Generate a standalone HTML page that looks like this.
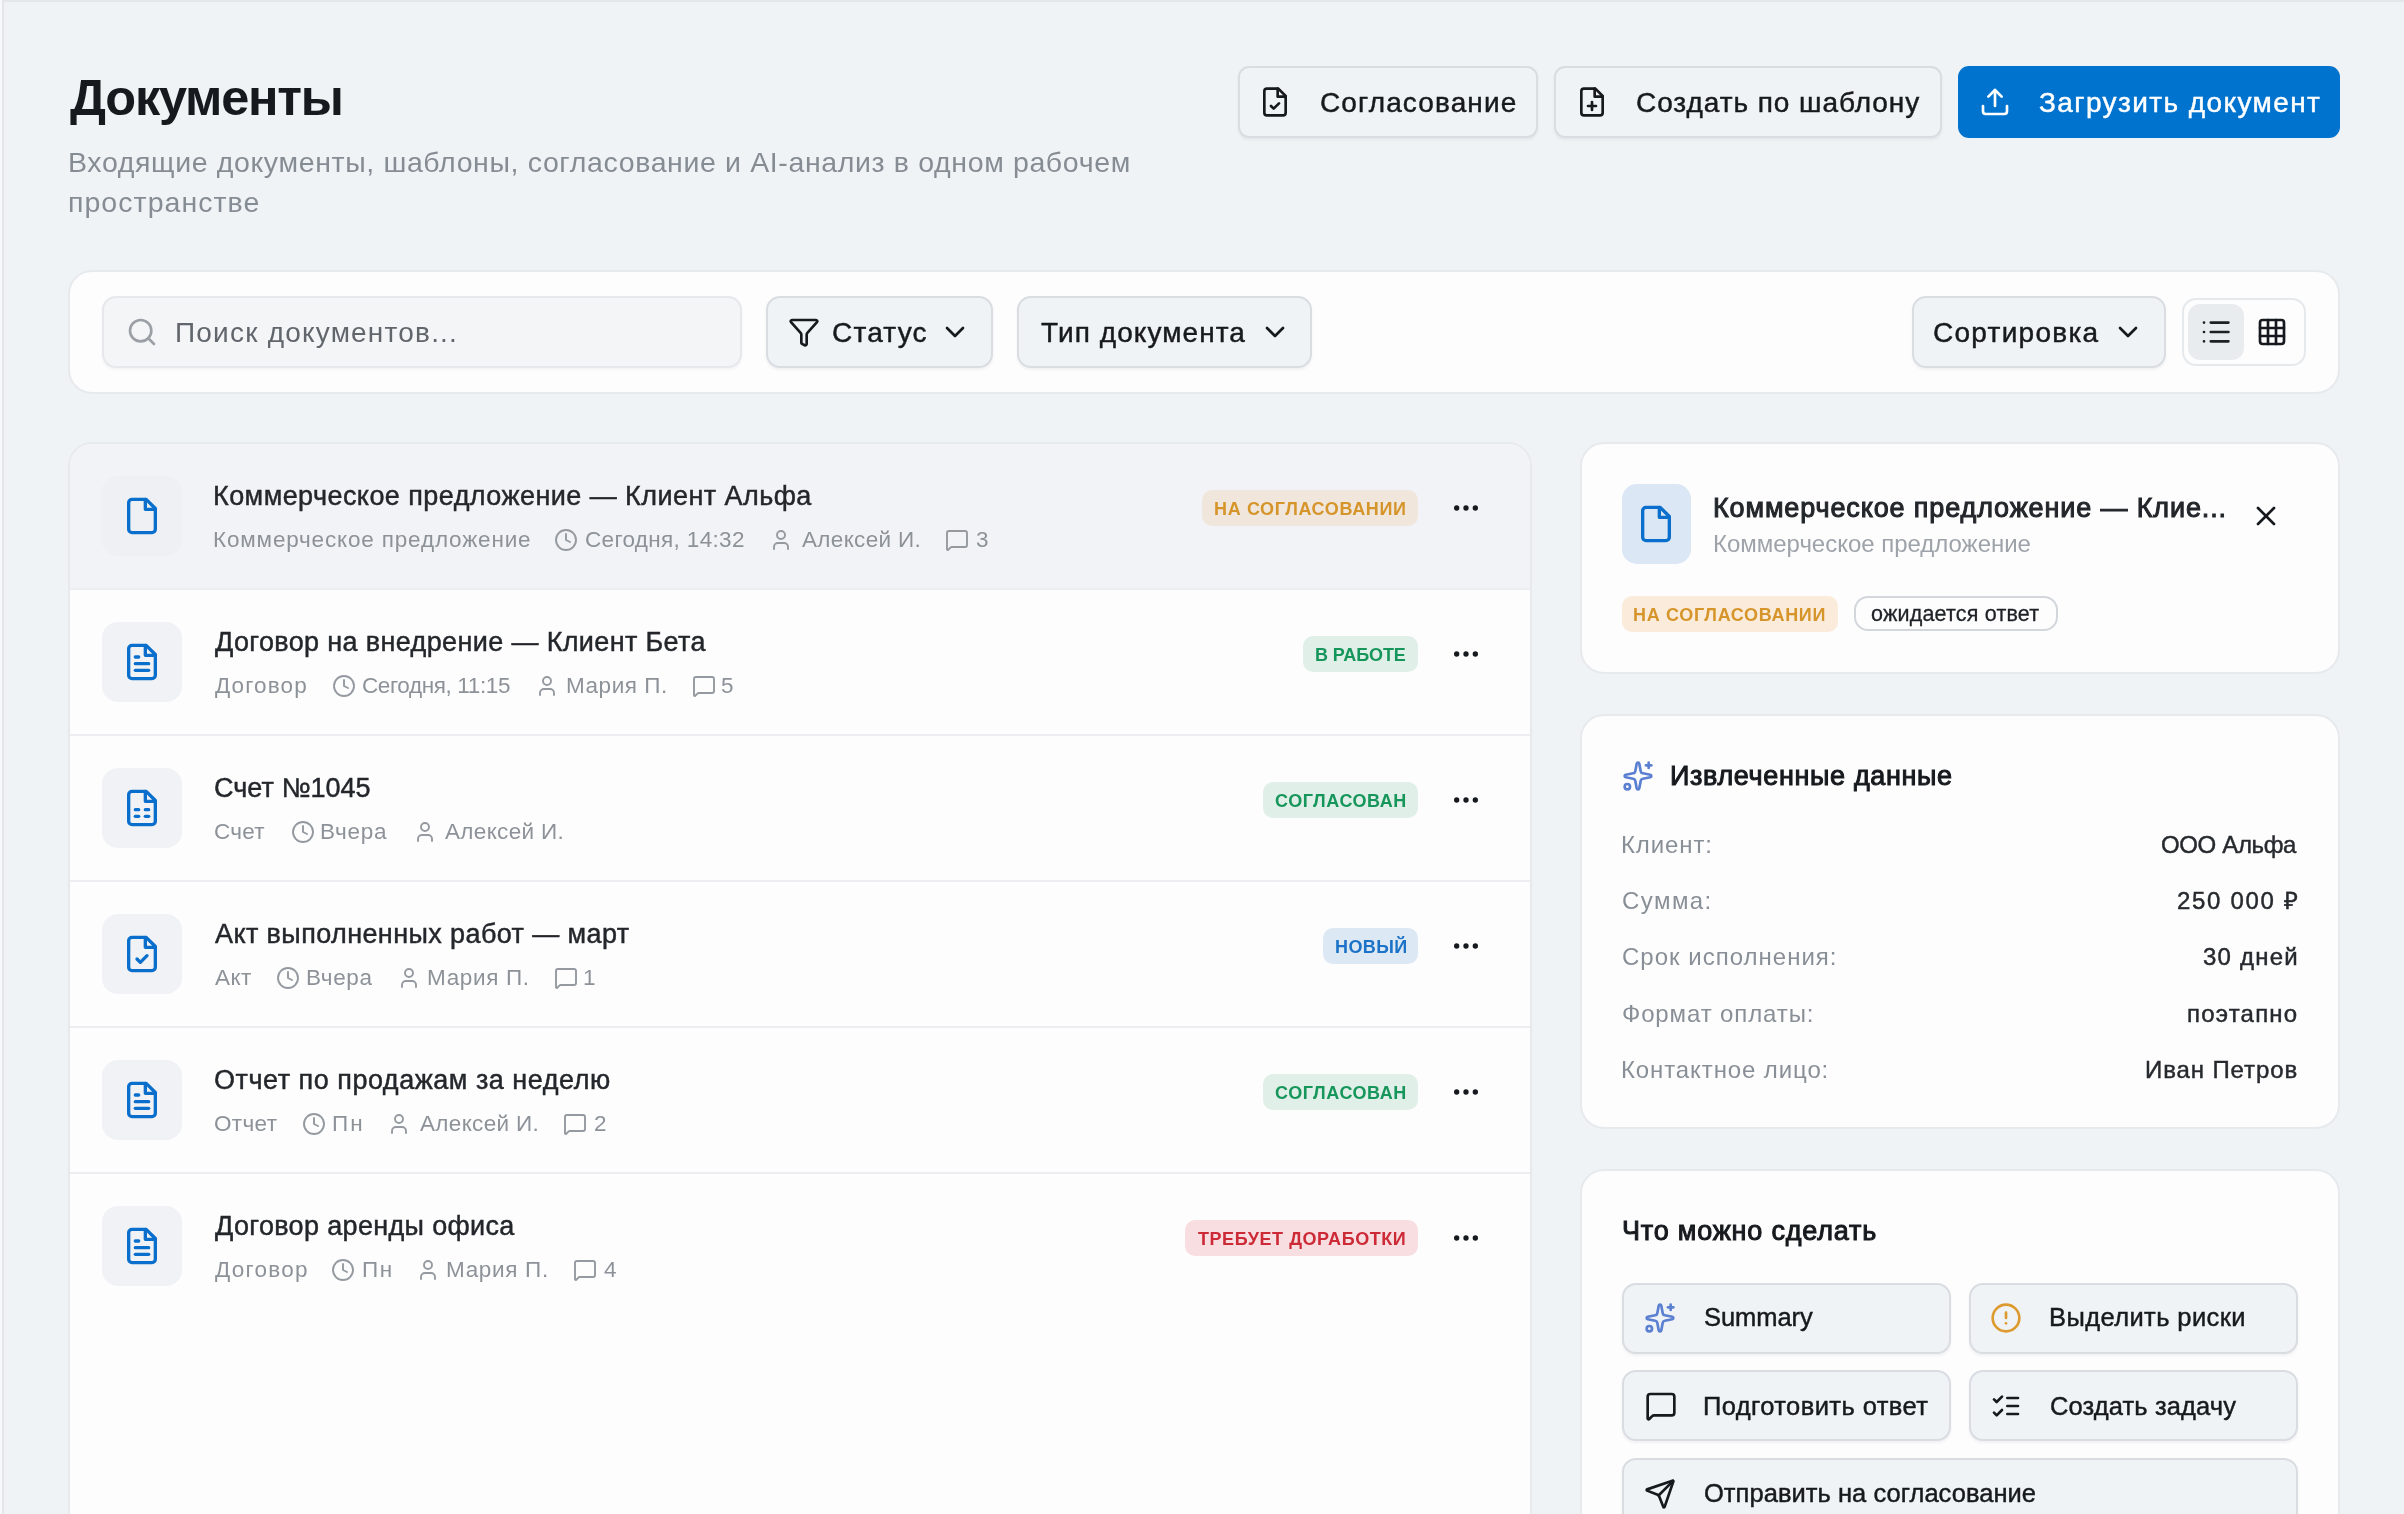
<!DOCTYPE html>
<html lang="ru"><head><meta charset="utf-8"><title>Документы</title>
<style>
html,body{margin:0;padding:0}
body{width:2404px;height:1514px;overflow:hidden;position:relative;background:#f0f3f6;font-family:"Liberation Sans",sans-serif}
body>div,body>svg,body>span{position:absolute}
.t{line-height:1;white-space:nowrap;will-change:transform}
</style></head><body>
<div style="left:0px;top:0px;width:2px;height:1514px;background:#f8f9fb"></div>
<div style="left:2px;top:0px;width:2px;height:1514px;background:#e3e6ea"></div>
<div style="left:2px;top:0px;width:2402px;height:2px;background:#e3e6ea"></div>
<div style="left:1238px;top:66px;width:300px;height:72px;background:#f0f3f6;border:2px solid #d9dde2;border-radius:14px;box-shadow:0 2px 3px rgba(16,24,40,0.05);box-sizing:border-box;border-radius:11px;"></div>
<div style="left:1554px;top:66px;width:388px;height:72px;background:#f0f3f6;border:2px solid #d9dde2;border-radius:14px;box-shadow:0 2px 3px rgba(16,24,40,0.05);box-sizing:border-box;border-radius:11px;"></div>
<div style="left:1958px;top:66px;width:382px;height:72px;background:#0073cf;border-radius:11px;"></div>
<svg style="left:1259px;top:86.4px" width="32" height="32" viewBox="0 0 24 24" fill="none" stroke="#16191d" stroke-width="2" stroke-linecap="round" stroke-linejoin="round"><path d="M14.5 2H6a2 2 0 0 0-2 2v16a2 2 0 0 0 2 2h12a2 2 0 0 0 2-2V7.5L14.5 2z"/><polyline points="14 2 14 8 20 8"/><path d="m9 15 2 2 4-4"/></svg>
<svg style="left:1575.5px;top:86.4px" width="32" height="32" viewBox="0 0 24 24" fill="none" stroke="#16191d" stroke-width="2" stroke-linecap="round" stroke-linejoin="round"><path d="M14.5 2H6a2 2 0 0 0-2 2v16a2 2 0 0 0 2 2h12a2 2 0 0 0 2-2V7.5L14.5 2z"/><polyline points="14 2 14 8 20 8"/><path d="M9 15h6"/><path d="M12 18v-6"/></svg>
<svg style="left:1979px;top:86.3px" width="32" height="32" viewBox="0 0 24 24" fill="none" stroke="#ffffff" stroke-width="2" stroke-linecap="round" stroke-linejoin="round"><path d="M21 15v4a2 2 0 0 1-2 2H5a2 2 0 0 1-2-2v-4"/><polyline points="17 8 12 3 7 8"/><line x1="12" x2="12" y1="3" y2="15"/></svg>
<div style="left:68px;top:270px;width:2272px;height:124px;background:#fdfdfe;border:2px solid #e7eaed;border-radius:24px;box-sizing:border-box;"></div>
<div style="left:102px;top:296px;width:640px;height:72px;background:#f4f5f7;border:2px solid #e6e8eb;border-radius:14px;box-sizing:border-box;box-shadow:0 2px 3px rgba(16,24,40,0.04);"></div>
<svg style="left:126.3px;top:316.3px" width="32" height="32" viewBox="0 0 24 24" fill="none" stroke="#9aa0a6" stroke-width="2" stroke-linecap="round" stroke-linejoin="round"><circle cx="11" cy="11" r="8"/><path d="m21 21-4.3-4.3"/></svg>
<div style="left:766px;top:296px;width:227px;height:72px;background:#f0f3f6;border:2px solid #d9dde2;border-radius:14px;box-shadow:0 2px 3px rgba(16,24,40,0.05);box-sizing:border-box;"></div>
<svg style="left:788.3px;top:316px" width="32" height="32" viewBox="0 0 24 24" fill="none" stroke="#16191d" stroke-width="2" stroke-linecap="round" stroke-linejoin="round"><path d="M10 20a1 1 0 0 0 .553.895l2 1A1 1 0 0 0 14 21v-7a2 2 0 0 1 .517-1.341L21.74 4.67A1 1 0 0 0 21 3H3a1 1 0 0 0-.742 1.67l7.225 7.989A2 2 0 0 1 10 14z"/></svg>
<svg style="left:938.8px;top:316px" width="32" height="32" viewBox="0 0 24 24" fill="none" stroke="#16191d" stroke-width="2" stroke-linecap="round" stroke-linejoin="round"><path d="m6 9 6 6 6-6"/></svg>
<div style="left:1017px;top:296px;width:295px;height:72px;background:#f0f3f6;border:2px solid #d9dde2;border-radius:14px;box-shadow:0 2px 3px rgba(16,24,40,0.05);box-sizing:border-box;"></div>
<svg style="left:1259.3px;top:316px" width="32" height="32" viewBox="0 0 24 24" fill="none" stroke="#16191d" stroke-width="2" stroke-linecap="round" stroke-linejoin="round"><path d="m6 9 6 6 6-6"/></svg>
<div style="left:1912px;top:296px;width:254px;height:72px;background:#f0f3f6;border:2px solid #d9dde2;border-radius:14px;box-shadow:0 2px 3px rgba(16,24,40,0.05);box-sizing:border-box;"></div>
<svg style="left:2112.3px;top:316px" width="32" height="32" viewBox="0 0 24 24" fill="none" stroke="#16191d" stroke-width="2" stroke-linecap="round" stroke-linejoin="round"><path d="m6 9 6 6 6-6"/></svg>
<div style="left:2182px;top:298px;width:124px;height:68px;background:#fdfdfe;border:2px solid #e6e9ec;border-radius:14px;box-sizing:border-box;"></div>
<div style="left:2188px;top:304px;width:56px;height:56px;background:#e9ecef;border-radius:12px;"></div>
<svg style="left:2196px;top:316px" width="40" height="32" viewBox="0 0 40 32" fill="none" stroke="#1d2024" stroke-width="2.7" stroke-linecap="round"><path d="M8 6.6h.01M8 16h.01M8 25.3h.01M14.8 6.6h17.6M14.8 16h17.6M14.8 25.3h17.6"/></svg>
<svg style="left:2256px;top:316px" width="32" height="32" viewBox="0 0 24 24" fill="none" stroke="#16191d" stroke-width="2" stroke-linecap="round" stroke-linejoin="round"><rect width="18" height="18" x="3" y="3" rx="2"/><path d="M3 9h18"/><path d="M3 15h18"/><path d="M9 3v18"/><path d="M15 3v18"/></svg>
<div style="left:68px;top:442px;width:1464px;height:1158px;background:#fdfdfe;border:2px solid #e7eaed;border-radius:24px;box-sizing:border-box;"></div>
<div style="left:70px;top:444px;width:1460px;height:144px;background:#f2f3f6;border-radius:22px 22px 0 0;"></div>
<div style="left:70px;top:588px;width:1460px;height:2px;background:#eceef1"></div>
<div style="left:70px;top:734px;width:1460px;height:2px;background:#eceef1"></div>
<div style="left:70px;top:880px;width:1460px;height:2px;background:#eceef1"></div>
<div style="left:70px;top:1026px;width:1460px;height:2px;background:#eceef1"></div>
<div style="left:70px;top:1172px;width:1460px;height:2px;background:#eceef1"></div>
<div style="left:102px;top:476px;width:80px;height:80px;background:#eef0f3;border-radius:16px;"></div>
<svg style="left:122px;top:496.3px" width="40" height="40" viewBox="0 0 24 24" fill="none" stroke="#0a6fcc" stroke-width="2" stroke-linecap="round" stroke-linejoin="round"><path d="M14.5 2H6a2 2 0 0 0-2 2v16a2 2 0 0 0 2 2h12a2 2 0 0 0 2-2V7.5L14.5 2z"/><polyline points="14 2 14 8 20 8"/></svg>
<svg style="left:554.4px;top:528px" width="24" height="24" viewBox="0 0 24 24" fill="none" stroke="#949aa0" stroke-width="1.9" stroke-linecap="round" stroke-linejoin="round"><circle cx="12" cy="12" r="10"/><polyline points="12 6 12 12 16 14"/></svg>
<svg style="left:769px;top:528px" width="24" height="24" viewBox="0 0 24 24" fill="none" stroke="#949aa0" stroke-width="1.9" stroke-linecap="round" stroke-linejoin="round"><path d="M19 21v-2a4 4 0 0 0-4-4H9a4 4 0 0 0-4 4v2"/><circle cx="12" cy="7" r="4"/></svg>
<svg style="left:944.8px;top:528px" width="24" height="24" viewBox="0 0 24 24" fill="none" stroke="#949aa0" stroke-width="1.9" stroke-linecap="round" stroke-linejoin="round"><path d="M22 17a2 2 0 0 1-2 2H6.828a2 2 0 0 0-1.414.586l-2.202 2.202A.71.71 0 0 1 2 21.286V5a2 2 0 0 1 2-2h16a2 2 0 0 1 2 2z"/></svg>
<div style="left:1202px;top:490px;width:216px;height:36px;background:rgba(230,150,40,0.13);border-radius:10px;"></div>
<svg style="left:1450px;top:492px" width="32" height="32" viewBox="0 0 24 24" fill="none" stroke="#16191d" stroke-width="2" stroke-linecap="round" stroke-linejoin="round"><circle cx="12" cy="12" r="1"/><circle cx="19" cy="12" r="1"/><circle cx="5" cy="12" r="1"/></svg>
<div style="left:102px;top:622px;width:80px;height:80px;background:#f1f2f5;border-radius:16px;"></div>
<svg style="left:122px;top:642.3px" width="40" height="40" viewBox="0 0 24 24" fill="none" stroke="#0a6fcc" stroke-width="2" stroke-linecap="round" stroke-linejoin="round"><path d="M14.5 2H6a2 2 0 0 0-2 2v16a2 2 0 0 0 2 2h12a2 2 0 0 0 2-2V7.5L14.5 2z"/><polyline points="14 2 14 8 20 8"/><path d="M10 9H8"/><path d="M16 13H8"/><path d="M16 17H8"/></svg>
<svg style="left:331.5px;top:674px" width="24" height="24" viewBox="0 0 24 24" fill="none" stroke="#949aa0" stroke-width="1.9" stroke-linecap="round" stroke-linejoin="round"><circle cx="12" cy="12" r="10"/><polyline points="12 6 12 12 16 14"/></svg>
<svg style="left:535px;top:674px" width="24" height="24" viewBox="0 0 24 24" fill="none" stroke="#949aa0" stroke-width="1.9" stroke-linecap="round" stroke-linejoin="round"><path d="M19 21v-2a4 4 0 0 0-4-4H9a4 4 0 0 0-4 4v2"/><circle cx="12" cy="7" r="4"/></svg>
<svg style="left:691.7px;top:674px" width="24" height="24" viewBox="0 0 24 24" fill="none" stroke="#949aa0" stroke-width="1.9" stroke-linecap="round" stroke-linejoin="round"><path d="M22 17a2 2 0 0 1-2 2H6.828a2 2 0 0 0-1.414.586l-2.202 2.202A.71.71 0 0 1 2 21.286V5a2 2 0 0 1 2-2h16a2 2 0 0 1 2 2z"/></svg>
<div style="left:1303px;top:636px;width:115px;height:36px;background:#e0efe7;border-radius:10px;"></div>
<svg style="left:1450px;top:638px" width="32" height="32" viewBox="0 0 24 24" fill="none" stroke="#16191d" stroke-width="2" stroke-linecap="round" stroke-linejoin="round"><circle cx="12" cy="12" r="1"/><circle cx="19" cy="12" r="1"/><circle cx="5" cy="12" r="1"/></svg>
<div style="left:102px;top:768px;width:80px;height:80px;background:#f1f2f5;border-radius:16px;"></div>
<svg style="left:122px;top:788.3px" width="40" height="40" viewBox="0 0 24 24" fill="none" stroke="#0a6fcc" stroke-width="2" stroke-linecap="round" stroke-linejoin="round"><path d="M14.5 2H6a2 2 0 0 0-2 2v16a2 2 0 0 0 2 2h12a2 2 0 0 0 2-2V7.5L14.5 2z"/><polyline points="14 2 14 8 20 8"/><path d="M8 13h2"/><path d="M14 13h2"/><path d="M8 17h2"/><path d="M14 17h2"/></svg>
<svg style="left:290.9px;top:820px" width="24" height="24" viewBox="0 0 24 24" fill="none" stroke="#949aa0" stroke-width="1.9" stroke-linecap="round" stroke-linejoin="round"><circle cx="12" cy="12" r="10"/><polyline points="12 6 12 12 16 14"/></svg>
<svg style="left:412.5px;top:820px" width="24" height="24" viewBox="0 0 24 24" fill="none" stroke="#949aa0" stroke-width="1.9" stroke-linecap="round" stroke-linejoin="round"><path d="M19 21v-2a4 4 0 0 0-4-4H9a4 4 0 0 0-4 4v2"/><circle cx="12" cy="7" r="4"/></svg>
<div style="left:1262.7px;top:782px;width:155.29999999999995px;height:36px;background:#e0efe7;border-radius:10px;"></div>
<svg style="left:1450px;top:784px" width="32" height="32" viewBox="0 0 24 24" fill="none" stroke="#16191d" stroke-width="2" stroke-linecap="round" stroke-linejoin="round"><circle cx="12" cy="12" r="1"/><circle cx="19" cy="12" r="1"/><circle cx="5" cy="12" r="1"/></svg>
<div style="left:102px;top:914px;width:80px;height:80px;background:#f1f2f5;border-radius:16px;"></div>
<svg style="left:122px;top:934.3px" width="40" height="40" viewBox="0 0 24 24" fill="none" stroke="#0a6fcc" stroke-width="2" stroke-linecap="round" stroke-linejoin="round"><path d="M14.5 2H6a2 2 0 0 0-2 2v16a2 2 0 0 0 2 2h12a2 2 0 0 0 2-2V7.5L14.5 2z"/><polyline points="14 2 14 8 20 8"/><path d="m9 15 2 2 4-4"/></svg>
<svg style="left:276px;top:966px" width="24" height="24" viewBox="0 0 24 24" fill="none" stroke="#949aa0" stroke-width="1.9" stroke-linecap="round" stroke-linejoin="round"><circle cx="12" cy="12" r="10"/><polyline points="12 6 12 12 16 14"/></svg>
<svg style="left:397px;top:966px" width="24" height="24" viewBox="0 0 24 24" fill="none" stroke="#949aa0" stroke-width="1.9" stroke-linecap="round" stroke-linejoin="round"><path d="M19 21v-2a4 4 0 0 0-4-4H9a4 4 0 0 0-4 4v2"/><circle cx="12" cy="7" r="4"/></svg>
<svg style="left:554px;top:966px" width="24" height="24" viewBox="0 0 24 24" fill="none" stroke="#949aa0" stroke-width="1.9" stroke-linecap="round" stroke-linejoin="round"><path d="M22 17a2 2 0 0 1-2 2H6.828a2 2 0 0 0-1.414.586l-2.202 2.202A.71.71 0 0 1 2 21.286V5a2 2 0 0 1 2-2h16a2 2 0 0 1 2 2z"/></svg>
<div style="left:1322.8px;top:928px;width:95.20000000000005px;height:36px;background:#dde8f5;border-radius:10px;"></div>
<svg style="left:1450px;top:930px" width="32" height="32" viewBox="0 0 24 24" fill="none" stroke="#16191d" stroke-width="2" stroke-linecap="round" stroke-linejoin="round"><circle cx="12" cy="12" r="1"/><circle cx="19" cy="12" r="1"/><circle cx="5" cy="12" r="1"/></svg>
<div style="left:102px;top:1060px;width:80px;height:80px;background:#f1f2f5;border-radius:16px;"></div>
<svg style="left:122px;top:1080.3px" width="40" height="40" viewBox="0 0 24 24" fill="none" stroke="#0a6fcc" stroke-width="2" stroke-linecap="round" stroke-linejoin="round"><path d="M14.5 2H6a2 2 0 0 0-2 2v16a2 2 0 0 0 2 2h12a2 2 0 0 0 2-2V7.5L14.5 2z"/><polyline points="14 2 14 8 20 8"/><path d="M10 9H8"/><path d="M16 13H8"/><path d="M16 17H8"/></svg>
<svg style="left:302px;top:1112px" width="24" height="24" viewBox="0 0 24 24" fill="none" stroke="#949aa0" stroke-width="1.9" stroke-linecap="round" stroke-linejoin="round"><circle cx="12" cy="12" r="10"/><polyline points="12 6 12 12 16 14"/></svg>
<svg style="left:387px;top:1112px" width="24" height="24" viewBox="0 0 24 24" fill="none" stroke="#949aa0" stroke-width="1.9" stroke-linecap="round" stroke-linejoin="round"><path d="M19 21v-2a4 4 0 0 0-4-4H9a4 4 0 0 0-4 4v2"/><circle cx="12" cy="7" r="4"/></svg>
<svg style="left:563.3px;top:1112px" width="24" height="24" viewBox="0 0 24 24" fill="none" stroke="#949aa0" stroke-width="1.9" stroke-linecap="round" stroke-linejoin="round"><path d="M22 17a2 2 0 0 1-2 2H6.828a2 2 0 0 0-1.414.586l-2.202 2.202A.71.71 0 0 1 2 21.286V5a2 2 0 0 1 2-2h16a2 2 0 0 1 2 2z"/></svg>
<div style="left:1262.7px;top:1074px;width:155.29999999999995px;height:36px;background:#e0efe7;border-radius:10px;"></div>
<svg style="left:1450px;top:1076px" width="32" height="32" viewBox="0 0 24 24" fill="none" stroke="#16191d" stroke-width="2" stroke-linecap="round" stroke-linejoin="round"><circle cx="12" cy="12" r="1"/><circle cx="19" cy="12" r="1"/><circle cx="5" cy="12" r="1"/></svg>
<div style="left:102px;top:1206px;width:80px;height:80px;background:#f1f2f5;border-radius:16px;"></div>
<svg style="left:122px;top:1226.3px" width="40" height="40" viewBox="0 0 24 24" fill="none" stroke="#0a6fcc" stroke-width="2" stroke-linecap="round" stroke-linejoin="round"><path d="M14.5 2H6a2 2 0 0 0-2 2v16a2 2 0 0 0 2 2h12a2 2 0 0 0 2-2V7.5L14.5 2z"/><polyline points="14 2 14 8 20 8"/><path d="M10 9H8"/><path d="M16 13H8"/><path d="M16 17H8"/></svg>
<svg style="left:331.4px;top:1258px" width="24" height="24" viewBox="0 0 24 24" fill="none" stroke="#949aa0" stroke-width="1.9" stroke-linecap="round" stroke-linejoin="round"><circle cx="12" cy="12" r="10"/><polyline points="12 6 12 12 16 14"/></svg>
<svg style="left:415.8px;top:1258px" width="24" height="24" viewBox="0 0 24 24" fill="none" stroke="#949aa0" stroke-width="1.9" stroke-linecap="round" stroke-linejoin="round"><path d="M19 21v-2a4 4 0 0 0-4-4H9a4 4 0 0 0-4 4v2"/><circle cx="12" cy="7" r="4"/></svg>
<svg style="left:573px;top:1258px" width="24" height="24" viewBox="0 0 24 24" fill="none" stroke="#949aa0" stroke-width="1.9" stroke-linecap="round" stroke-linejoin="round"><path d="M22 17a2 2 0 0 1-2 2H6.828a2 2 0 0 0-1.414.586l-2.202 2.202A.71.71 0 0 1 2 21.286V5a2 2 0 0 1 2-2h16a2 2 0 0 1 2 2z"/></svg>
<div style="left:1184.8px;top:1220px;width:233.20000000000005px;height:36px;background:#f8dee1;border-radius:10px;"></div>
<svg style="left:1450px;top:1222px" width="32" height="32" viewBox="0 0 24 24" fill="none" stroke="#16191d" stroke-width="2" stroke-linecap="round" stroke-linejoin="round"><circle cx="12" cy="12" r="1"/><circle cx="19" cy="12" r="1"/><circle cx="5" cy="12" r="1"/></svg>
<div style="left:1580px;top:442px;width:760px;height:232px;background:#fdfdfe;border:2px solid #e7eaed;border-radius:24px;box-sizing:border-box;"></div>
<div style="left:1622px;top:484px;width:69px;height:80px;background:#dce7f5;border-radius:15px;"></div>
<svg style="left:1635.8px;top:503.8px" width="40" height="40" viewBox="0 0 24 24" fill="none" stroke="#0a6fcc" stroke-width="2" stroke-linecap="round" stroke-linejoin="round"><path d="M14.5 2H6a2 2 0 0 0-2 2v16a2 2 0 0 0 2 2h12a2 2 0 0 0 2-2V7.5L14.5 2z"/><polyline points="14 2 14 8 20 8"/></svg>
<svg style="left:2250px;top:500.3px" width="32" height="32" viewBox="0 0 24 24" fill="none" stroke="#16191d" stroke-width="2" stroke-linecap="round" stroke-linejoin="round"><path d="M18 6 6 18"/><path d="m6 6 12 12"/></svg>
<div style="left:1622px;top:596px;width:216px;height:35.60000000000002px;background:#fbebda;border-radius:10px;"></div>
<div style="left:1854.4px;top:596.2px;width:203.29999999999973px;height:35.19999999999993px;background:#fdfdfe;border:2px solid #d3d7dc;border-radius:14px;box-sizing:border-box;"></div>
<div style="left:1580px;top:714px;width:760px;height:415px;background:#fdfdfe;border:2px solid #e7eaed;border-radius:24px;box-sizing:border-box;"></div>
<svg style="left:1622px;top:760px" width="32" height="32" viewBox="0 0 24 24" fill="none" stroke="#5b7fd1" stroke-width="2" stroke-linecap="round" stroke-linejoin="round"><path d="M11.017 2.814a1 1 0 0 1 1.966 0l1.051 5.558a2 2 0 0 0 1.594 1.594l5.558 1.051a1 1 0 0 1 0 1.966l-5.558 1.051a2 2 0 0 0-1.594 1.594l-1.051 5.558a1 1 0 0 1-1.966 0l-1.051-5.558a2 2 0 0 0-1.594-1.594l-5.558-1.051a1 1 0 0 1 0-1.966l5.558-1.051a2 2 0 0 0 1.594-1.594z"/><path d="M20 2v4"/><path d="M22 4h-4"/><circle cx="4" cy="20" r="2"/></svg>
<div style="left:1580px;top:1169px;width:760px;height:431px;background:#fdfdfe;border:2px solid #e7eaed;border-radius:24px;box-sizing:border-box;"></div>
<div style="left:1622px;top:1282.5px;width:329px;height:71.0px;background:#f0f3f6;border:2px solid #d9dde2;border-radius:14px;box-shadow:0 2px 3px rgba(16,24,40,0.05);box-sizing:border-box;"></div>
<div style="left:1969px;top:1282.5px;width:329px;height:71.0px;background:#f0f3f6;border:2px solid #d9dde2;border-radius:14px;box-shadow:0 2px 3px rgba(16,24,40,0.05);box-sizing:border-box;"></div>
<div style="left:1622px;top:1370px;width:329px;height:71px;background:#f0f3f6;border:2px solid #d9dde2;border-radius:14px;box-shadow:0 2px 3px rgba(16,24,40,0.05);box-sizing:border-box;"></div>
<div style="left:1969px;top:1370px;width:329px;height:71px;background:#f0f3f6;border:2px solid #d9dde2;border-radius:14px;box-shadow:0 2px 3px rgba(16,24,40,0.05);box-sizing:border-box;"></div>
<div style="left:1622px;top:1458px;width:676px;height:71px;background:#f0f3f6;border:2px solid #d9dde2;border-radius:14px;box-shadow:0 2px 3px rgba(16,24,40,0.05);box-sizing:border-box;"></div>
<svg style="left:1644.2px;top:1302px" width="32" height="32" viewBox="0 0 24 24" fill="none" stroke="#5b7fd1" stroke-width="2" stroke-linecap="round" stroke-linejoin="round"><path d="M11.017 2.814a1 1 0 0 1 1.966 0l1.051 5.558a2 2 0 0 0 1.594 1.594l5.558 1.051a1 1 0 0 1 0 1.966l-5.558 1.051a2 2 0 0 0-1.594 1.594l-1.051 5.558a1 1 0 0 1-1.966 0l-1.051-5.558a2 2 0 0 0-1.594-1.594l-5.558-1.051a1 1 0 0 1 0-1.966l5.558-1.051a2 2 0 0 0 1.594-1.594z"/><path d="M20 2v4"/><path d="M22 4h-4"/><circle cx="4" cy="20" r="2"/></svg>
<svg style="left:1990.2px;top:1301.7px" width="32" height="32" viewBox="0 0 24 24" fill="none" stroke="#dd9a2f" stroke-width="2" stroke-linecap="round" stroke-linejoin="round"><circle cx="12" cy="12" r="10"/><line x1="12" x2="12" y1="8" y2="12"/><line x1="12" x2="12.01" y1="16" y2="16"/></svg>
<svg style="left:1644.5px;top:1390.3px" width="32" height="32" viewBox="0 0 24 24" fill="none" stroke="#16191d" stroke-width="2" stroke-linecap="round" stroke-linejoin="round"><path d="M22 17a2 2 0 0 1-2 2H6.828a2 2 0 0 0-1.414.586l-2.202 2.202A.71.71 0 0 1 2 21.286V5a2 2 0 0 1 2-2h16a2 2 0 0 1 2 2z"/></svg>
<svg style="left:1990.1px;top:1389.8px" width="32" height="32" viewBox="0 0 24 24" fill="none" stroke="#16191d" stroke-width="2" stroke-linecap="round" stroke-linejoin="round"><path d="m3 17 2 2 4-4"/><path d="m3 7 2 2 4-4"/><path d="M13 6h8"/><path d="M13 12h8"/><path d="M13 18h8"/></svg>
<svg style="left:1644px;top:1477.7px" width="32" height="32" viewBox="0 0 24 24" fill="none" stroke="#16191d" stroke-width="2" stroke-linecap="round" stroke-linejoin="round"><path d="M14.536 21.686a.5.5 0 0 0 .937-.024l6.5-19a.496.496 0 0 0-.635-.635l-19 6.5a.5.5 0 0 0-.024.937l7.93 3.18a2 2 0 0 1 1.112 1.11z"/><path d="m21.854 2.147-10.94 10.939"/></svg>
<span class="t" style="left:69.6px;top:73.0px;font-size:50.5px;font-weight:700;color:#16191d;letter-spacing:-1.26px;">Документы</span>
<span class="t" style="left:67.6px;top:147.7px;font-size:28.5px;font-weight:400;color:#868c93;letter-spacing:0.63px;">Входящие документы, шаблоны, согласование и AI-анализ в одном рабочем</span>
<span class="t" style="left:67.6px;top:187.6px;font-size:28.5px;font-weight:400;color:#868c93;letter-spacing:1.04px;">пространстве</span>
<span class="t" style="left:1319.6px;top:89.0px;font-size:28px;font-weight:400;color:#16191d;letter-spacing:1.11px;-webkit-text-stroke:0.45px #16191d;">Согласование</span>
<span class="t" style="left:1636.0px;top:89.0px;font-size:28px;font-weight:400;color:#16191d;letter-spacing:0.94px;-webkit-text-stroke:0.45px #16191d;">Создать по шаблону</span>
<span class="t" style="left:2039.0px;top:89.0px;font-size:28px;font-weight:400;color:#ffffff;letter-spacing:1.41px;-webkit-text-stroke:0.45px #ffffff;">Загрузить документ</span>
<span class="t" style="left:175.3px;top:318.8px;font-size:28px;font-weight:400;color:#60666c;letter-spacing:1.21px;">Поиск документов...</span>
<span class="t" style="left:832.1px;top:318.8px;font-size:28px;font-weight:400;color:#16191d;letter-spacing:1.20px;-webkit-text-stroke:0.45px #16191d;">Статус</span>
<span class="t" style="left:1041.0px;top:318.8px;font-size:28px;font-weight:400;color:#16191d;letter-spacing:1.08px;-webkit-text-stroke:0.45px #16191d;">Тип документа</span>
<span class="t" style="left:1933.0px;top:318.8px;font-size:28px;font-weight:400;color:#16191d;letter-spacing:1.28px;-webkit-text-stroke:0.45px #16191d;">Сортировка</span>
<span class="t" style="left:213.0px;top:483.0px;font-size:27px;font-weight:400;color:#23262a;letter-spacing:0.44px;-webkit-text-stroke:0.45px #23262a;">Коммерческое предложение — Клиент Альфа</span>
<span class="t" style="left:213.0px;top:529.0px;font-size:22.5px;font-weight:400;color:#8c9298;letter-spacing:0.83px;">Коммерческое предложение</span>
<span class="t" style="left:585.0px;top:529.0px;font-size:22.5px;font-weight:400;color:#8c9298;letter-spacing:0.34px;">Сегодня, 14:32</span>
<span class="t" style="left:801.7px;top:529.0px;font-size:22.5px;font-weight:400;color:#8c9298;letter-spacing:0.34px;">Алексей И.</span>
<span class="t" style="left:976.0px;top:529.0px;font-size:22.5px;font-weight:400;color:#8c9298;letter-spacing:0.00px;">3</span>
<span class="t" style="left:1214.0px;top:500.0px;font-size:18px;font-weight:700;color:#d6952b;letter-spacing:0.64px;">НА СОГЛАСОВАНИИ</span>
<span class="t" style="left:215.0px;top:629.0px;font-size:27px;font-weight:400;color:#23262a;letter-spacing:0.36px;-webkit-text-stroke:0.45px #23262a;">Договор на внедрение — Клиент Бета</span>
<span class="t" style="left:214.8px;top:675.0px;font-size:22.5px;font-weight:400;color:#8c9298;letter-spacing:1.13px;">Договор</span>
<span class="t" style="left:362.0px;top:675.0px;font-size:22.5px;font-weight:400;color:#8c9298;letter-spacing:-0.38px;">Сегодня, 11:15</span>
<span class="t" style="left:566.0px;top:675.0px;font-size:22.5px;font-weight:400;color:#8c9298;letter-spacing:0.54px;">Мария П.</span>
<span class="t" style="left:721.0px;top:675.0px;font-size:22.5px;font-weight:400;color:#8c9298;letter-spacing:0.00px;">5</span>
<span class="t" style="left:1314.5px;top:646.0px;font-size:18px;font-weight:700;color:#17965b;letter-spacing:-0.07px;">В РАБОТЕ</span>
<span class="t" style="left:214.0px;top:775.0px;font-size:27px;font-weight:400;color:#23262a;letter-spacing:0.03px;-webkit-text-stroke:0.45px #23262a;">Счет №1045</span>
<span class="t" style="left:214.0px;top:821.0px;font-size:22.5px;font-weight:400;color:#8c9298;letter-spacing:0.23px;">Счет</span>
<span class="t" style="left:320.0px;top:821.0px;font-size:22.5px;font-weight:400;color:#8c9298;letter-spacing:0.75px;">Вчера</span>
<span class="t" style="left:444.8px;top:821.0px;font-size:22.5px;font-weight:400;color:#8c9298;letter-spacing:0.33px;">Алексей И.</span>
<span class="t" style="left:1274.8px;top:792.0px;font-size:18px;font-weight:700;color:#17965b;letter-spacing:0.58px;">СОГЛАСОВАН</span>
<span class="t" style="left:215.0px;top:921.0px;font-size:27px;font-weight:400;color:#23262a;letter-spacing:0.40px;-webkit-text-stroke:0.45px #23262a;">Акт выполненных работ — март</span>
<span class="t" style="left:215.0px;top:967.0px;font-size:22.5px;font-weight:400;color:#8c9298;letter-spacing:0.45px;">Акт</span>
<span class="t" style="left:306.0px;top:967.0px;font-size:22.5px;font-weight:400;color:#8c9298;letter-spacing:0.60px;">Вчера</span>
<span class="t" style="left:427.4px;top:967.0px;font-size:22.5px;font-weight:400;color:#8c9298;letter-spacing:0.66px;">Мария П.</span>
<span class="t" style="left:583.0px;top:967.0px;font-size:22.5px;font-weight:400;color:#8c9298;letter-spacing:0.00px;">1</span>
<span class="t" style="left:1334.5px;top:938.0px;font-size:18px;font-weight:700;color:#1b72c6;letter-spacing:0.38px;">НОВЫЙ</span>
<span class="t" style="left:214.0px;top:1067.0px;font-size:27px;font-weight:400;color:#23262a;letter-spacing:0.52px;-webkit-text-stroke:0.45px #23262a;">Отчет по продажам за неделю</span>
<span class="t" style="left:214.0px;top:1113.0px;font-size:22.5px;font-weight:400;color:#8c9298;letter-spacing:0.35px;">Отчет</span>
<span class="t" style="left:332.0px;top:1113.0px;font-size:22.5px;font-weight:400;color:#8c9298;letter-spacing:2.00px;">Пн</span>
<span class="t" style="left:419.5px;top:1113.0px;font-size:22.5px;font-weight:400;color:#8c9298;letter-spacing:0.33px;">Алексей И.</span>
<span class="t" style="left:594.0px;top:1113.0px;font-size:22.5px;font-weight:400;color:#8c9298;letter-spacing:0.00px;">2</span>
<span class="t" style="left:1274.8px;top:1084.0px;font-size:18px;font-weight:700;color:#17965b;letter-spacing:0.58px;">СОГЛАСОВАН</span>
<span class="t" style="left:215.0px;top:1213.0px;font-size:27px;font-weight:400;color:#23262a;letter-spacing:0.34px;-webkit-text-stroke:0.45px #23262a;">Договор аренды офиса</span>
<span class="t" style="left:215.0px;top:1259.0px;font-size:22.5px;font-weight:400;color:#8c9298;letter-spacing:1.25px;">Договор</span>
<span class="t" style="left:362.0px;top:1259.0px;font-size:22.5px;font-weight:400;color:#8c9298;letter-spacing:1.70px;">Пн</span>
<span class="t" style="left:446.0px;top:1259.0px;font-size:22.5px;font-weight:400;color:#8c9298;letter-spacing:0.67px;">Мария П.</span>
<span class="t" style="left:604.0px;top:1259.0px;font-size:22.5px;font-weight:400;color:#8c9298;letter-spacing:0.00px;">4</span>
<span class="t" style="left:1198.0px;top:1230.0px;font-size:18px;font-weight:700;color:#cc2a37;letter-spacing:0.56px;">ТРЕБУЕТ ДОРАБОТКИ</span>
<span class="t" style="left:1713.0px;top:495.2px;font-size:27px;font-weight:400;color:#23262a;letter-spacing:0.87px;-webkit-text-stroke:1.0px #23262a;">Коммерческое предложение — Клие...</span>
<span class="t" style="left:1713.0px;top:531.5px;font-size:24px;font-weight:400;color:#9ea3a9;letter-spacing:-0.02px;">Коммерческое предложение</span>
<span class="t" style="left:1633.4px;top:606.4px;font-size:18px;font-weight:700;color:#d6952b;letter-spacing:0.67px;">НА СОГЛАСОВАНИИ</span>
<span class="t" style="left:1871.4px;top:604.2px;font-size:21.5px;font-weight:400;color:#1e2125;letter-spacing:0.19px;-webkit-text-stroke:0.3px #1e2125;">ожидается ответ</span>
<span class="t" style="left:1669.5px;top:763.0px;font-size:27px;font-weight:400;color:#16191d;letter-spacing:0.64px;-webkit-text-stroke:1.0px #16191d;">Извлеченные данные</span>
<span class="t" style="left:1621.3px;top:833.1px;font-size:24px;font-weight:400;color:#898f96;letter-spacing:0.88px;">Клиент:</span>
<span class="t" style="left:2160.5px;top:833.1px;font-size:24px;font-weight:400;color:#26292d;letter-spacing:-0.36px;-webkit-text-stroke:0.45px #26292d;">ООО Альфа</span>
<span class="t" style="left:1622.3px;top:889.0px;font-size:24px;font-weight:400;color:#898f96;letter-spacing:1.44px;">Сумма:</span>
<span class="t" style="left:2177.0px;top:889.0px;font-size:24px;font-weight:400;color:#26292d;letter-spacing:1.70px;-webkit-text-stroke:0.45px #26292d;">250 000 ₽</span>
<span class="t" style="left:1622.3px;top:945.4px;font-size:24px;font-weight:400;color:#898f96;letter-spacing:1.01px;">Срок исполнения:</span>
<span class="t" style="left:2203.3px;top:945.4px;font-size:24px;font-weight:400;color:#26292d;letter-spacing:1.22px;-webkit-text-stroke:0.45px #26292d;">30 дней</span>
<span class="t" style="left:1622.3px;top:1001.6px;font-size:24px;font-weight:400;color:#898f96;letter-spacing:0.88px;">Формат оплаты:</span>
<span class="t" style="left:2187.2px;top:1001.6px;font-size:24px;font-weight:400;color:#26292d;letter-spacing:1.20px;-webkit-text-stroke:0.45px #26292d;">поэтапно</span>
<span class="t" style="left:1621.3px;top:1057.5px;font-size:24px;font-weight:400;color:#898f96;letter-spacing:0.89px;">Контактное лицо:</span>
<span class="t" style="left:2144.7px;top:1057.5px;font-size:24px;font-weight:400;color:#26292d;letter-spacing:0.89px;-webkit-text-stroke:0.45px #26292d;">Иван Петров</span>
<span class="t" style="left:1622.1px;top:1218.3px;font-size:27px;font-weight:400;color:#16191d;letter-spacing:0.81px;-webkit-text-stroke:1.0px #16191d;">Что можно сделать</span>
<span class="t" style="left:1703.9px;top:1305.0px;font-size:25.5px;font-weight:400;color:#16191d;letter-spacing:-0.05px;-webkit-text-stroke:0.45px #16191d;">Summary</span>
<span class="t" style="left:2048.5px;top:1305.0px;font-size:25.5px;font-weight:400;color:#16191d;letter-spacing:0.40px;-webkit-text-stroke:0.45px #16191d;">Выделить риски</span>
<span class="t" style="left:1702.6px;top:1393.5px;font-size:25.5px;font-weight:400;color:#16191d;letter-spacing:0.42px;-webkit-text-stroke:0.45px #16191d;">Подготовить ответ</span>
<span class="t" style="left:2049.5px;top:1393.5px;font-size:25.5px;font-weight:400;color:#16191d;letter-spacing:0.12px;-webkit-text-stroke:0.45px #16191d;">Создать задачу</span>
<span class="t" style="left:1703.6px;top:1480.5px;font-size:25.5px;font-weight:400;color:#16191d;letter-spacing:0.04px;-webkit-text-stroke:0.45px #16191d;">Отправить на согласование</span>
</body></html>
